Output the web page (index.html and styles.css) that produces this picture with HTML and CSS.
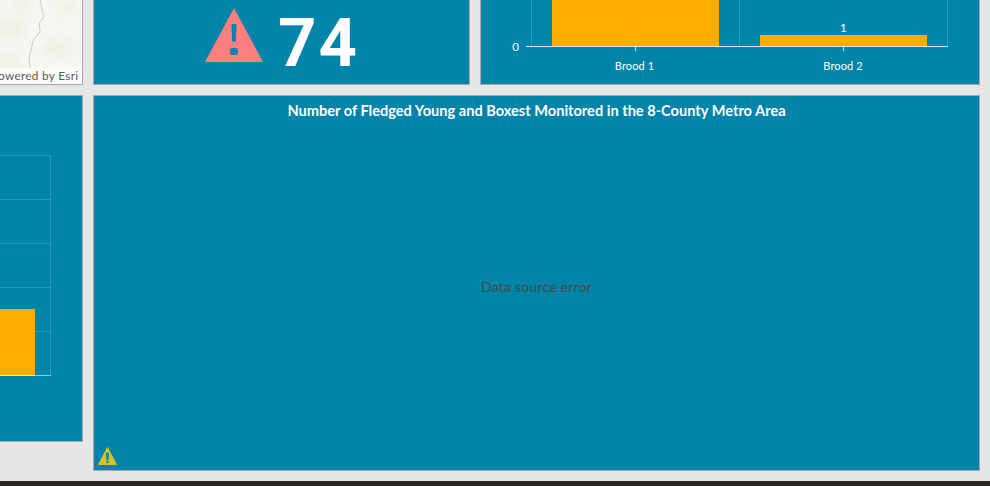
FILE: index.html
```html
<!DOCTYPE html>
<html lang="en">
<head>
<meta charset="utf-8">
<title>Metro Area Bluebird Dashboard</title>
<link rel="stylesheet" href="styles.css">
</head>
<body>
<div class="dash">
  <section class="panel map">
    <svg class="map-art" viewBox="-9 -9 91 77" preserveAspectRatio="none" aria-hidden="true">
      <defs>
        <filter id="soft"><feGaussianBlur stdDeviation="4"/></filter>
        <filter id="mottle" x="0" y="0" width="100%" height="100%">
          <feTurbulence type="fractalNoise" baseFrequency="0.22" numOctaves="3" seed="7"/>
          <feColorMatrix type="matrix" values="0 0 0 0 0.84  0 0 0 0 0.88  0 0 0 0 0.74  1.800 0 0 0 -0.700"/>
        </filter>
      </defs>
      <rect x="-9" y="-9" width="91" height="77" fill="#f7f7f3"/>
      <g filter="url(#soft)" fill="#eef1e3">
        <ellipse cx="10" cy="28" rx="16" ry="11"/>
        <ellipse cx="22" cy="4" rx="11" ry="6"/>
        <ellipse cx="68" cy="8" rx="12" ry="5"/>
        <ellipse cx="58" cy="48" rx="16" ry="9"/>
        <ellipse cx="8" cy="60" rx="12" ry="6"/>
      </g>
      <rect x="-9" y="-9" width="91" height="77" filter="url(#mottle)" opacity="0.350"/>
      <path d="M40 0L41.700 8 43.700 17 39.300 23 40 32 33.300 40 31 50 29 57 30 68" fill="none" stroke="#c9c9c6" stroke-width="1"/>
    </svg>
    <div class="attribution">Powered by Esri</div>
  </section>

  <section class="panel stat">
    <svg class="alert" viewBox="0 0 58 54" aria-hidden="true">
      <path d="M29 0L58 54H0Z" fill="#ff7f7f"/>
      <path d="M26.500 16H31.500L31 33.500H27Z" fill="#0084a9"/>
      <rect x="25" y="40" width="8" height="7" rx="2" fill="#0084a9"/>
    </svg>
    <span class="stat-value">74</span>
  </section>

  <section class="panel brood">
    <svg class="chart" width="498" height="93" viewBox="0 1 498 93" role="img">
      <g class="grid">
        <path d="M50.500 0V56M258.500 0V56M466.500 0V56"/>
      </g>
      <rect class="bar" x="71" width="167" height="56"/>
      <rect class="bar" x="279" y="45" width="167" height="11"/>
      <path class="axis" d="M45 56.500H467M154.500 56V61M362.500 56V61"/>
      <text class="tick" x="38" y="61">0</text>
      <text class="tick mid" x="362.500" y="42">1</text>
      <text class="cat" x="153.500" y="80">Brood 1</text>
      <text class="cat" x="362" y="80">Brood 2</text>
    </svg>
  </section>

  <section class="panel side">
    <svg class="chart" width="91" height="345" viewBox="0 0 91 345" aria-hidden="true">
      <path class="grid-line" d="M0 59.500H59.500M0 103.500H59.500M0 147.500H59.500M0 191.500H59.500M0 235.500H59.500M59.500 59V279"/>
      <rect class="bar" y="213" width="44" height="66"/>
      <path class="axis-soft" d="M0 279.500H60"/>
      <path class="axis" d="M0 279.500H44"/>
    </svg>
  </section>

  <section class="panel main">
    <h2 class="main-title">Number of Fledged Young and Boxest Monitored in the 8-County Metro Area</h2>
    <div class="main-body">Data source error</div>
    <svg class="warn" viewBox="0 0 20 20" aria-hidden="true">
      <path d="M9.500 1.500L18.500 18.500H.5Z" fill="#d3c22f" stroke="#d3c22f" stroke-linejoin="round"/>
      <path d="M8 6.700H11L10.600 14H8.400Z" fill="#0084a9"/>
      <rect x="8.300" y="14.800" width="2.400" height="2" fill="#0084a9"/>
    </svg>
  </section>
</div>
<footer class="bottom-bar"></footer>
</body>
</html>
```

FILE: styles.css
```css
* { box-sizing: border-box; }

html, body {
  margin: 0;
  height: 100%;
  overflow: hidden;
}

body {
  background: #e6e6e6;
  font-family: "Lato", "Liberation Sans", sans-serif;
  display: flex;
  flex-direction: column;
}

.dash {
  flex: 1;
  margin: -10px 10px 10px -10px;
  display: grid;
  grid-template-columns: 93px 377px 500px;
  grid-template-rows: 95px 376px;
  gap: 10px;
}

.panel {
  position: relative;
  background: #0084a9;
  border: 1px solid #a8a8a8;
  overflow: hidden;
}

.map {
  background: #f7f7f3;
  display: flex;
  flex-direction: column;
  align-items: flex-end;
}

.map-art {
  display: block;
  width: 100%;
  flex: 1;
  min-height: 0;
}

.attribution {
  width: 100%;
  height: 16px;
  padding-right: 6px;
  background: #fbfbfb;
  color: #5a5a5a;
  font-size: 11.800px;
  letter-spacing: 0.300px;
  line-height: 15px;
  text-align: right;
  white-space: nowrap;
}

.stat {
  display: flex;
  align-items: center;
  justify-content: center;
  gap: 15px;
  padding-left: 1px;
}

.alert {
  width: 58px;
  height: 54px;
  flex: none;
  margin-bottom: 5px;
}

.stat-value {
  margin-top: 11px;
  color: #fff;
  font-family: "Roboto", "Liberation Sans", sans-serif;
  font-size: 67px;
  font-weight: 700;
  letter-spacing: 2px;
  line-height: 70px;
}

.chart {
  display: block;
}

.grid path,
.grid-line {
  fill: none;
  stroke: #2f9aba;
  stroke-width: 1;
}

.bar {
  fill: #ffab00;
}

.axis {
  fill: none;
  stroke: #d5e9ef;
  stroke-width: 1;
}

.axis-soft {
  fill: none;
  stroke: #8ccbdd;
  stroke-width: 1;
}

.tick,
.cat {
  fill: #fff;
  font-size: 11px;
  letter-spacing: 0.100px;
}

.tick {
  font-size: 11.500px;
  text-anchor: end;
}

.tick.mid,
.cat {
  text-anchor: middle;
}

.side {
  grid-column: 1;
  grid-row: 2;
  height: 347px;
  align-self: start;
}

.main {
  grid-column: 2 / 4;
  grid-row: 2;
  display: flex;
  flex-direction: column;
}

.main-title {
  margin: 0;
  padding-top: 5px;
  color: #fff;
  font-size: 14.600px;
  font-weight: 700;
  line-height: 19px;
  text-align: center;
}

.main-body {
  flex: 1;
  display: flex;
  align-items: center;
  justify-content: center;
  padding-bottom: 18px;
  color: #4a4a4a;
  font-size: 14px;
  letter-spacing: 0.200px;
}

.warn {
  position: absolute;
  left: 4px;
  bottom: 4px;
  width: 20px;
  height: 20px;
}

.bottom-bar {
  flex: none;
  height: 5px;
  background: #2c2723;
}
```
